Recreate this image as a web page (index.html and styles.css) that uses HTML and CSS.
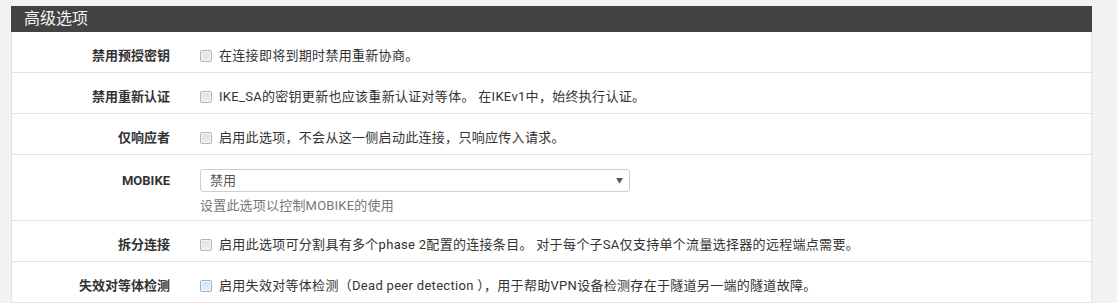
FILE: index.html
```html
<!DOCTYPE html>
<html lang="zh-CN">
<head>
    <meta charset="UTF-8">
    <title>高级选项</title>
    <link rel="stylesheet" href="styles.css">
</head>
<body>
    <div class="panel">
        <!-- 标题栏 -->
        <div class="panel-heading">高级选项</div>

        <div class="panel-body">
            <div class="form-row">
                <div class="form-label">禁用预授密钥</div>
                <label class="check"><span class="box"></span>在连接即将到期时禁用重新协商。</label>
            </div>

            <div class="form-row">
                <div class="form-label">禁用重新认证</div>
                <label class="check"><span class="box"></span>IKE_SA的密钥更新也应该重新认证对等体。 在IKEv1中，始终执行认证。</label>
            </div>

            <div class="form-row">
                <div class="form-label">仅响应者</div>
                <label class="check"><span class="box"></span>启用此选项，不会从这一侧启动此连接，只响应传入请求。</label>
            </div>

            <div class="form-row form-row-select">
                <div class="form-label form-label-select">MOBIKE</div>
                <div>
                    <div class="select">
                        <span>禁用</span>
                        <span class="caret">▼</span>
                    </div>
                    <div class="help">设置此选项以控制MOBIKE的使用</div>
                </div>
            </div>

            <div class="form-row">
                <div class="form-label">拆分连接</div>
                <label class="check"><span class="box"></span>启用此选项可分割具有多个phase 2配置的连接条目。 对于每个子SA仅支持单个流量选择器的远程端点需要。</label>
            </div>

            <div class="form-row">
                <div class="form-label">失效对等体检测</div>
                <label class="check"><span class="box box-hover"></span>启用失效对等体检测（Dead peer detection ），用于帮助VPN设备检测存在于隧道另一端的隧道故障。</label>
            </div>
        </div>
    </div>
</body>
</html>
```

FILE: styles.css
```css
body {
    margin: 0;
    background: #f2f2f2;
    font-family: Roboto, "Noto Sans CJK SC", sans-serif;
    font-size: 13px;
    color: #333;
}

/* 面板 */
.panel {
    margin: 6px 25px 0 11px;
    background: #fff;
    border-left: 1px solid #e2e2e2;
    border-right: 1px solid #e2e2e2;
}

.panel-heading {
    height: 26px;
    line-height: 26px;
    padding-left: 13px;
    margin-left: -1px;
    margin-right: -1px;
    background: #424242;
    color: #f4f4f4;
    font-size: 16px;
}

/* 表单行 */
.form-row {
    display: grid;
    grid-template-columns: 158px 1fr;
    column-gap: 30px;
    padding: 14px 0 6px;
    border-bottom: 1px solid #e1e1e1;
    line-height: 20px;
}

.form-row-select {
    padding-bottom: 4px;
}

.form-label {
    text-align: right;
    font-weight: bold;
    color: #333;
}

.form-label-select {
    line-height: 23px;
}

.check {
    display: flex;
    align-items: center;
    gap: 7px;
    color: #333;
    letter-spacing: 0.3px;
}

.box {
    display: inline-block;
    flex: none;
    width: 10px;
    height: 10px;
    border: 1px solid #b4b4b4;
    border-radius: 2px;
    background: linear-gradient(#e2e2e2, #ececec);
    box-shadow: inset 0 0 0 1px #f6f6f6;
}

.box-hover {
    border-color: #8fb5de;
    background: linear-gradient(#d7e4f2, #e5eef8);
}

/* 下拉框 */
.select {
    box-sizing: border-box;
    width: 430px;
    height: 23px;
    padding: 0 6px 0 9px;
    display: flex;
    align-items: center;
    justify-content: space-between;
    border: 1px solid #cfcfcf;
    border-radius: 3px;
    color: #555;
}

.caret {
    font-size: 7px;
    color: #555;
}

.help {
    margin-top: 4px;
    color: #777;
    letter-spacing: 0.2px;
}
```
